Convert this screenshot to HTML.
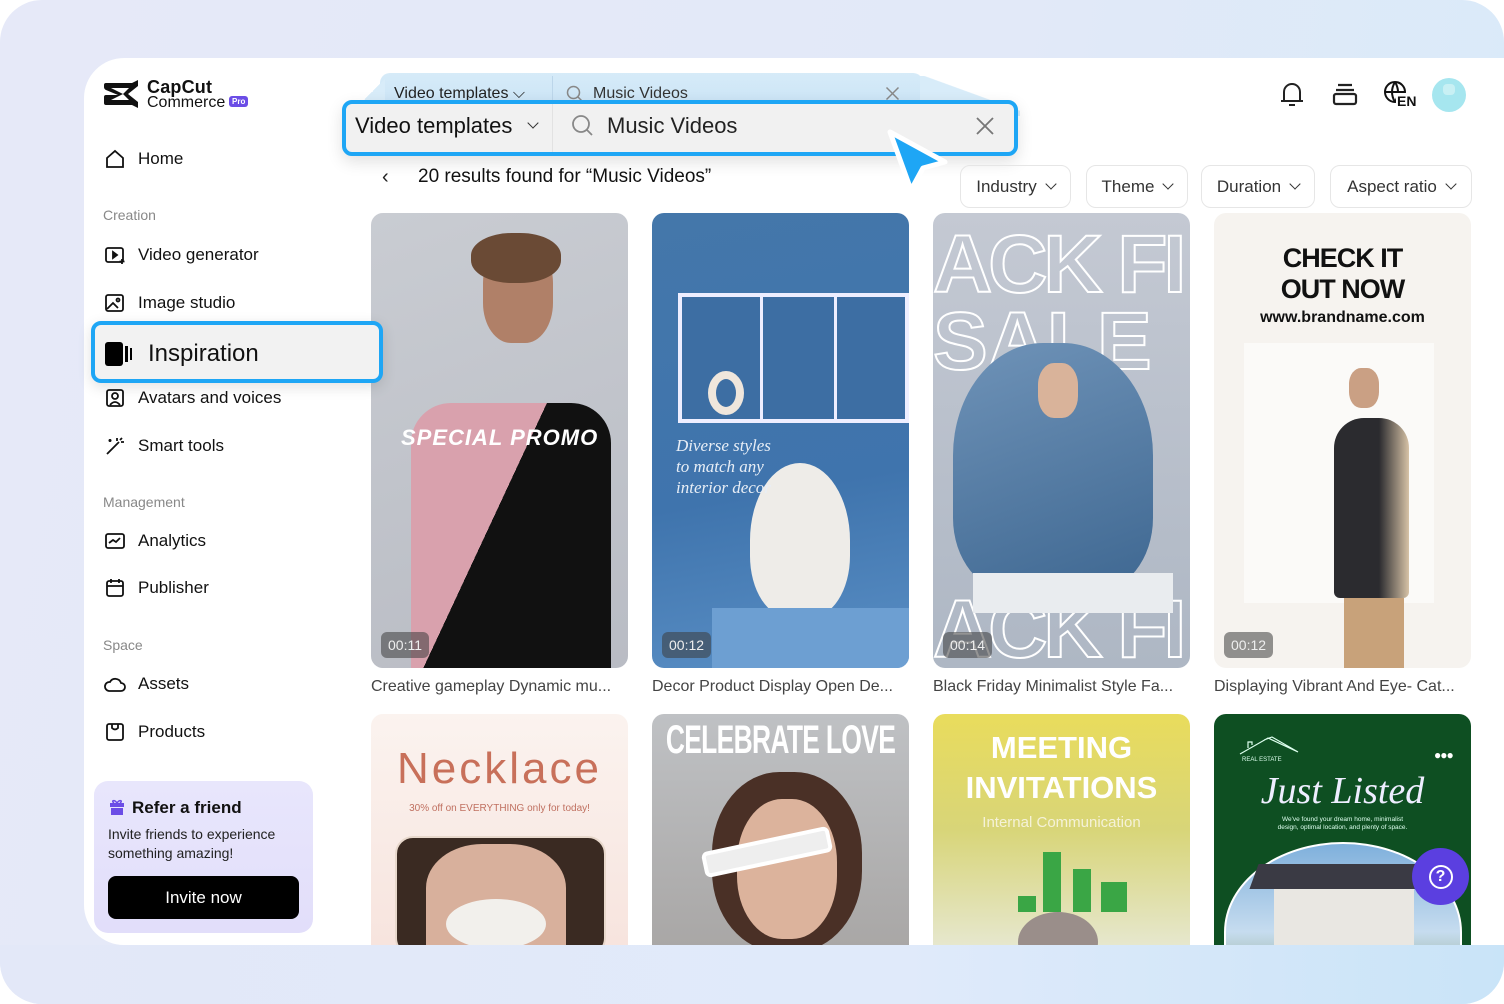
<!DOCTYPE html>
<html><head><meta charset="utf-8"><style>
*{box-sizing:border-box;margin:0;padding:0}
html,body{width:1504px;height:1004px;overflow:hidden;background:#fff;font-family:"Liberation Sans",sans-serif;color:#111}
.outer{position:absolute;left:0;top:0;width:1504px;height:1004px;border-radius:42px;background:linear-gradient(100deg,#e6e9f8 0%,#e2e9f8 60%,#d8eaf9 100%)}
.card{position:absolute;left:84px;top:58px;width:1420px;height:887px;background:#fff;border-radius:40px 0 0 40px;overflow:hidden}
.bottom{position:absolute;left:0;top:945px;width:1504px;height:59px;border-radius:0 0 42px 42px;background:linear-gradient(90deg,#e3e8f8 0%,#e0eafa 60%,#c9e4f8 100%)}
.abs{position:absolute}
.nav{position:absolute;left:104px;font-size:17px;color:#111;display:flex;align-items:center;gap:12px}
.nav svg{width:22px;height:22px}
.sec{position:absolute;left:103px;font-size:14px;color:#888}
.thumb{position:absolute;width:257px;height:455px;border-radius:12px;overflow:hidden}
.dur{position:absolute;left:10px;bottom:10px;background:rgba(60,60,60,.55);color:#eee;font-size:14px;padding:5px 7px;border-radius:6px}
.cap{position:absolute;font-size:16px;color:#444;white-space:nowrap}
.filter{position:absolute;top:165px;height:43px;border:1px solid #e6e6e6;border-radius:10px;font-size:17px;color:#333;display:flex;align-items:center;justify-content:center;gap:6px}
.chev{display:inline-block;width:8px;height:8px;border-right:1.5px solid #333;border-bottom:1.5px solid #333;transform:rotate(45deg);margin-top:-5px;margin-left:4px}
</style></head><body>
<div class="outer"></div>
<div class="bottom"></div>
<div class="card"></div>

<!-- logo -->
<svg class="abs" style="left:103px;top:79px" width="38" height="30" viewBox="0 0 38 30"><path d="M3 4h26l6-3v6l-10 8 10 8v6l-6-3H3q-2 0-2-2v-6q0-2 2-2h12L3 11Q1 10 1 8V6q0-2 2-2zM8 9l12 6-12 6h18l-6-6 6-6z" fill="#111"/></svg>
<div class="abs" style="left:147px;top:77px;font-size:18px;font-weight:bold;letter-spacing:.2px">CapCut</div>
<div class="abs" style="left:147px;top:94px;font-size:16px">Commerce</div>
<div class="abs" style="left:229px;top:96px;background:#6b4de6;color:#fff;font-size:8px;font-weight:bold;padding:1px 3px;border-radius:3px">Pro</div>

<!-- sidebar -->
<div class="nav" style="top:148px"><svg viewBox="0 0 22 22" fill="none" stroke="#111" stroke-width="1.8"><path d="M3 10l8-7 8 7v9H3z"/></svg>Home</div>
<div class="sec" style="top:207px">Creation</div>
<div class="nav" style="top:244px"><svg viewBox="0 0 22 22" fill="none" stroke="#111" stroke-width="1.8"><rect x="2" y="4" width="17" height="14" rx="2"/><path d="M9 8l4 3-4 3z" fill="#111"/><path d="M18 15v5M15.5 17.5h5"/></svg>Video generator</div>
<div class="nav" style="top:292px"><svg viewBox="0 0 22 22" fill="none" stroke="#111" stroke-width="1.8"><rect x="2" y="3" width="17" height="16" rx="2"/><path d="M3 17l6-6 5 5"/><circle cx="14" cy="8" r="1.5"/></svg>Image studio</div>
<div class="nav" style="top:387px"><svg viewBox="0 0 22 22" fill="none" stroke="#111" stroke-width="1.8"><rect x="3" y="3" width="16" height="16" rx="2"/><circle cx="11" cy="9" r="3"/><path d="M6 18q5-6 10 0"/></svg>Avatars and voices</div>
<div class="nav" style="top:435px"><svg viewBox="0 0 22 22" fill="none" stroke="#111" stroke-width="1.8"><path d="M3 19L15 7M13 3v3M17 7h3M18 3l-2 2M6 4v3M4.5 5.5h3"/></svg>Smart tools</div>
<div class="sec" style="top:494px">Management</div>
<div class="nav" style="top:530px"><svg viewBox="0 0 22 22" fill="none" stroke="#111" stroke-width="1.8"><rect x="2" y="4" width="18" height="14" rx="2"/><path d="M5 13l4-3 3 2 4-4"/></svg>Analytics</div>
<div class="nav" style="top:577px"><svg viewBox="0 0 22 22" fill="none" stroke="#111" stroke-width="1.8"><rect x="3" y="4" width="16" height="15" rx="2"/><path d="M3 9h16M7 2v4M15 2v4"/></svg>Publisher</div>
<div class="sec" style="top:637px">Space</div>
<div class="nav" style="top:673px"><svg viewBox="0 0 22 22" fill="none" stroke="#111" stroke-width="1.8"><path d="M5 18h12a4 4 0 000-8 6 6 0 00-11-1 4.5 4.5 0 00-1 9z"/></svg>Assets</div>
<div class="nav" style="top:721px"><svg viewBox="0 0 22 22" fill="none" stroke="#111" stroke-width="1.8"><rect x="3" y="3" width="16" height="16" rx="2"/><path d="M8 3v4q3 3 6 0V3"/></svg>Products</div>

<!-- refer -->
<div class="abs" style="left:94px;top:781px;width:219px;height:152px;border-radius:14px;background:linear-gradient(180deg,#e8e6fc,#e2defa)"></div>
<svg class="abs" style="left:110px;top:799px" width="14" height="16" viewBox="0 0 14 16"><rect x="0" y="4" width="14" height="4" fill="#6b4de6"/><rect x="1" y="9" width="12" height="7" fill="#6b4de6"/><path d="M7 4C4 0 1 2 4 4M7 4c3-4 6-2 3 0" stroke="#6b4de6" fill="none" stroke-width="1.5"/></svg>
<div class="abs" style="left:132px;top:798px;font-size:17px;font-weight:bold;color:#111">Refer a friend</div>
<div class="abs" style="left:108px;top:825px;font-size:14px;line-height:19px;color:#222">Invite friends to experience<br>something amazing!</div>
<div class="abs" style="left:108px;top:876px;width:191px;height:43px;background:#000;border-radius:8px;color:#fff;font-size:17px;display:flex;align-items:center;justify-content:center">Invite now</div>

<!-- search back layer -->
<div class="abs" style="left:380px;top:73px;width:543px;height:40px;background:linear-gradient(180deg,#d6ebf8,#c9e3f6);border-radius:10px 10px 0 0"></div>
<div class="abs" style="left:355px;top:76px;width:30px;height:36px;background:linear-gradient(135deg,transparent 50%,#d8ecf9 50%)"></div>
<div class="abs" style="left:920px;top:76px;width:100px;height:40px;background:linear-gradient(200deg,transparent 45%,#d8ecf9 46%)"></div>
<div class="abs" style="left:552px;top:76px;width:1px;height:30px;background:#bcd6ea"></div>
<div class="abs" style="left:394px;top:85px;font-size:16px;color:#222">Video templates ⌵</div>
<svg class="abs" style="left:566px;top:85px" width="18" height="18" viewBox="0 0 24 24" fill="none" stroke="#888" stroke-width="2"><circle cx="10" cy="10" r="8"/><path d="M16 16l5 5"/></svg>
<div class="abs" style="left:593px;top:85px;font-size:16px;color:#333">Music Videos</div>
<svg class="abs" style="left:885px;top:86px" width="15" height="15" viewBox="0 0 20 20" stroke="#888" stroke-width="2"><path d="M2 2l16 16M18 2L2 18"/></svg>
<!-- search main -->
<div class="abs" style="left:342px;top:100px;width:676px;height:56px;border:4px solid #1ea6f5;border-radius:10px;background:#f1f1f1;box-shadow:0 6px 16px rgba(0,0,0,.12)"></div>
<div class="abs" style="left:552px;top:104px;width:1px;height:48px;background:#e2e2e2"></div>
<div class="abs" style="left:355px;top:113px;font-size:22px;color:#111">Video templates</div>
<div class="chev" style="position:absolute;left:525px;top:124px;border-color:#333"></div>
<svg class="abs" style="left:571px;top:114px" width="24" height="24" viewBox="0 0 24 24" fill="none" stroke="#888" stroke-width="1.8"><circle cx="10" cy="10" r="8"/><path d="M16 16l5 5"/></svg>
<div class="abs" style="left:607px;top:113px;font-size:22px;color:#222">Music Videos</div>
<svg class="abs" style="left:975px;top:116px" width="20" height="20" viewBox="0 0 20 20" stroke="#777" stroke-width="1.8"><path d="M2 2l16 16M18 2L2 18"/></svg>
<!-- cursor -->
<svg class="abs" style="left:880px;top:124px" width="70" height="80" viewBox="0 0 70 80"><path d="M10 8l55 30-22 6-12 22z" fill="#1ea6f5" stroke="#fff" stroke-width="5" stroke-linejoin="round"/></svg>

<!-- results -->
<div class="abs" style="left:382px;top:166px;font-size:20px;color:#222">‹</div>
<div class="abs" style="left:418px;top:166px;font-size:19px;color:#111">20 results found for “Music Videos”</div>

<div class="filter" style="left:960px;width:111px">Industry<span class="chev"></span></div>
<div class="filter" style="left:1086px;width:102px">Theme<span class="chev"></span></div>
<div class="filter" style="left:1201px;width:114px">Duration<span class="chev"></span></div>
<div class="filter" style="left:1330px;width:142px">Aspect ratio<span class="chev"></span></div>

<!-- top icons -->
<svg class="abs" style="left:1279px;top:80px" width="26" height="28" viewBox="0 0 26 28" fill="none" stroke="#222" stroke-width="2"><path d="M5 21V12a8 8 0 0116 0v9M2 21h22M10 25h6"/></svg>
<svg class="abs" style="left:1332px;top:82px" width="26" height="24" viewBox="0 0 26 24" fill="none" stroke="#222" stroke-width="2.2"><path d="M6 3h14M4 8h18"/><rect x="2" y="12" width="22" height="10" rx="2"/></svg>
<svg class="abs" style="left:1383px;top:80px" width="26" height="26" viewBox="0 0 26 26" fill="none" stroke="#111" stroke-width="2"><circle cx="12" cy="12" r="10"/><path d="M2 12h20M12 2q-6 10 0 20M12 2q6 10 0 20"/></svg>
<div class="abs" style="left:1396px;top:93px;font-size:14px;font-weight:bold;background:#fff;padding:0 1px">EN</div>
<div class="abs" style="left:1432px;top:78px;width:34px;height:34px;border-radius:50%;background:#a6e6ef;overflow:hidden"><div style="position:absolute;left:11px;top:6px;width:12px;height:11px;border-radius:4px;background:#c8f0f4"></div></div>

<!-- row 1 -->
<div class="thumb" style="left:371px;top:213px;background:linear-gradient(160deg,#c9ccd2,#b9bcc4)">
  <div class="abs" style="left:112px;top:30px;width:70px;height:100px;border-radius:40%;background:#b08068"></div>
  <div class="abs" style="left:100px;top:20px;width:90px;height:50px;border-radius:45%;background:#6a4a35"></div>
  <div class="abs" style="left:40px;top:190px;width:200px;height:265px;background:linear-gradient(115deg,#d9a1ad 0 42%,#111 42%);border-radius:40px 40px 0 0"></div>
  <div class="abs" style="left:30px;top:212px;font-size:22px;font-style:italic;font-weight:bold;color:#fff;letter-spacing:1px">SPECIAL PROMO</div>
  <div class="dur">00:11</div></div>
<div class="thumb" style="left:652px;top:213px;background:linear-gradient(170deg,#4477aa,#3f74ad 60%,#5a8fc5)">
  <div class="abs" style="left:26px;top:80px;width:231px;height:130px;border:4px solid #eef;background:#3d6ea3"></div>
  <div class="abs" style="left:108px;top:82px;width:3px;height:128px;background:#eef"></div>
  <div class="abs" style="left:182px;top:82px;width:3px;height:128px;background:#eef"></div>
  <div class="abs" style="left:56px;top:158px;width:36px;height:44px;border:8px solid #efe6dc;border-radius:50%"></div>
  <div class="abs" style="left:98px;top:250px;width:100px;height:155px;background:#eeece8;border-radius:50% 50% 40% 40%"></div>
  <div class="abs" style="left:24px;top:222px;font-family:'Liberation Serif',serif;font-style:italic;font-size:17px;line-height:21px;color:#e8eef6">Diverse styles<br>to match any<br>interior decor</div>
  <div class="abs" style="left:60px;top:395px;width:197px;height:60px;background:#6d9fd2"></div>
  <div class="dur">00:12</div></div>
<div class="thumb" style="left:933px;top:213px;background:linear-gradient(180deg,#c4c9d3,#aeb7c4)">
  <div class="abs" style="left:0;top:5px;font-size:82px;font-weight:bold;color:transparent;-webkit-text-stroke:2px #fff;letter-spacing:-4px;white-space:nowrap">ACK FI</div>
  <div class="abs" style="left:0;top:82px;font-size:82px;font-weight:bold;color:transparent;-webkit-text-stroke:2px #fff;white-space:nowrap">SALE</div>
  <div class="abs" style="left:0;top:370px;font-size:82px;font-weight:bold;color:transparent;-webkit-text-stroke:2px #fff;letter-spacing:-4px;white-space:nowrap">ACK FI</div>
  <div class="abs" style="left:20px;top:130px;width:200px;height:250px;border-radius:45% 45% 30% 30%;background:linear-gradient(160deg,#6f93b8,#3e6791)"></div>
  <div class="abs" style="left:105px;top:150px;width:40px;height:55px;border-radius:40%;background:#d9b39a"></div>
  <div class="abs" style="left:40px;top:360px;width:200px;height:40px;background:#e9ecef"></div>
  <div class="dur">00:14</div></div>
<div class="thumb" style="left:1214px;top:213px;background:#f6f3ef">
  <div class="abs" style="left:0;top:30px;width:257px;text-align:center;font-size:27px;font-weight:bold;line-height:31px;color:#111;letter-spacing:-1px">CHECK IT<br>OUT NOW</div>
  <div class="abs" style="left:0;top:96px;width:257px;text-align:center;font-size:16px;font-weight:bold;color:#111">www.brandname.com</div>
  <div class="abs" style="left:30px;top:130px;width:190px;height:260px;background:#fbfaf8"></div>
  <div class="abs" style="left:135px;top:155px;width:30px;height:40px;border-radius:40%;background:#caa084"></div>
  <div class="abs" style="left:120px;top:205px;width:75px;height:180px;border-radius:30px 30px 6px 6px;background:linear-gradient(90deg,#2b2b2f 60%,#d6c2a6)"></div>
  <div class="abs" style="left:130px;top:385px;width:60px;height:70px;background:#c8a27a"></div>
  <div class="dur">00:12</div></div>
<div class="cap" style="left:371px;top:678px">Creative gameplay Dynamic mu...</div>
<div class="cap" style="left:652px;top:678px">Decor Product Display Open De...</div>
<div class="cap" style="left:933px;top:678px">Black Friday Minimalist Style Fa...</div>
<div class="cap" style="left:1214px;top:678px">Displaying Vibrant And Eye- Cat...</div>

<!-- row 2 -->
<div class="thumb" style="left:371px;top:714px;height:231px;border-radius:12px 12px 0 0;background:linear-gradient(180deg,#fbf3ef,#f7e4de)">
  <div class="abs" style="left:0;top:30px;width:257px;text-align:center;font-size:44px;color:#c8705a;letter-spacing:3px">Necklace</div>
  <div class="abs" style="left:0;top:89px;width:257px;text-align:center;font-size:10px;color:#c07060">30% off on EVERYTHING only for today!</div>
  <div class="abs" style="left:24px;top:122px;width:211px;height:120px;border-radius:18px;background:#3a2a22;border:2px solid #e8d8cc"></div>
  <div class="abs" style="left:55px;top:130px;width:140px;height:110px;border-radius:40% 40% 0 0;background:#d8b09c"></div>
  <div class="abs" style="left:75px;top:185px;width:100px;height:50px;border-radius:50%;background:#f2f0ec"></div></div>
<div class="thumb" style="left:652px;top:714px;height:231px;border-radius:12px 12px 0 0;background:linear-gradient(180deg,#bfc1c4,#a9a7a6)">
  <div class="abs" style="left:60px;top:58px;width:150px;height:180px;border-radius:45%;background:#4a3026"></div>
  <div class="abs" style="left:85px;top:85px;width:100px;height:140px;border-radius:45%;background:#dcb39c"></div>
  <div class="abs" style="left:50px;top:125px;width:130px;height:26px;background:#eee;border:4px solid #fff;border-radius:6px;transform:rotate(-12deg)"></div>
  <div class="abs" style="left:-60px;top:4px;width:377px;text-align:center;font-size:40px;font-weight:bold;color:#fff;transform:scaleX(.66);letter-spacing:-1px;white-space:nowrap">CELEBRATE LOVE</div></div>
<div class="thumb" style="left:933px;top:714px;height:231px;border-radius:12px 12px 0 0;background:linear-gradient(180deg,#e9dc5c,#d8d578 50%,#e6e7cd)">
  <div class="abs" style="left:0;top:14px;width:257px;text-align:center;font-size:31px;font-weight:bold;color:#fff;line-height:40px">MEETING<br>INVITATIONS</div>
  <div class="abs" style="left:0;top:100px;width:257px;text-align:center;font-size:15px;color:#f5f2d8">Internal Communication</div>
  <div class="abs" style="left:110px;top:138px;width:18px;height:60px;background:#3aa645"></div>
  <div class="abs" style="left:140px;top:155px;width:18px;height:43px;background:#3aa645"></div>
  <div class="abs" style="left:168px;top:168px;width:26px;height:30px;background:#3aa645"></div>
  <div class="abs" style="left:85px;top:182px;width:18px;height:16px;background:#3aa645"></div>
  <div class="abs" style="left:85px;top:198px;width:80px;height:60px;border-radius:50%;background:#9a8e8a"></div></div>
<div class="thumb" style="left:1214px;top:714px;height:231px;border-radius:12px 12px 0 0;background:#0e4f22">
  <svg class="abs" style="left:24px;top:22px" width="64" height="20" viewBox="0 0 64 20" fill="none" stroke="#dfe" stroke-width="1.2"><path d="M2 18L30 2l30 14M26 4l8-3 26 15M10 12V6h4v3"/></svg>
  <div class="abs" style="left:28px;top:43px;font-size:6px;color:#dfe">REAL ESTATE</div>
  <div class="abs" style="left:220px;top:34px;font-size:12px;color:#fff;letter-spacing:-1px">●●●</div>
  <div class="abs" style="left:0;top:55px;width:257px;text-align:center;font-family:'Liberation Serif',serif;font-style:italic;font-size:38px;color:#eef">Just Listed</div>
  <div class="abs" style="left:0;top:102px;width:257px;text-align:center;font-size:6.5px;line-height:8px;color:#dfe">We've found your dream home, minimalist<br>design, optimal location, and plenty of space.</div>
  <div class="abs" style="left:10px;top:128px;width:238px;height:180px;border-radius:50% 50% 0 0;background:linear-gradient(180deg,#7fb0dc,#c6dcef 50%,#6f8a4c);border:2px solid #fff"></div>
  <div class="abs" style="left:60px;top:170px;width:140px;height:70px;background:#e9e7e2"></div>
  <div class="abs" style="left:40px;top:150px;width:190px;height:25px;background:#3a3a44;transform:skewX(-20deg)"></div></div>

<!-- Inspiration highlight (on top) -->
<div class="abs" style="left:91px;top:321px;width:292px;height:62px;border:4px solid #1ea6f5;border-radius:10px;background:#f2f2f2;box-shadow:0 4px 14px rgba(0,0,0,.12)"></div>
<div class="abs" style="left:105px;top:342px;width:18px;height:24px;background:#000;border-radius:3px"></div>
<div class="abs" style="left:125px;top:346px;width:3px;height:16px;background:#000"></div>
<div class="abs" style="left:130px;top:348px;width:2px;height:12px;background:#000"></div>
<div class="abs" style="left:148px;top:340px;font-size:24px;color:#111">Inspiration</div>

<!-- help -->
<div class="abs" style="left:1412px;top:848px;width:57px;height:57px;border-radius:50%;background:#5b3fe0;display:flex;align-items:center;justify-content:center"><div style="width:24px;height:24px;border:2.5px solid #fff;border-radius:50%;color:#fff;font-size:16px;font-weight:bold;text-align:center;line-height:19px">?</div></div>
</body></html>
